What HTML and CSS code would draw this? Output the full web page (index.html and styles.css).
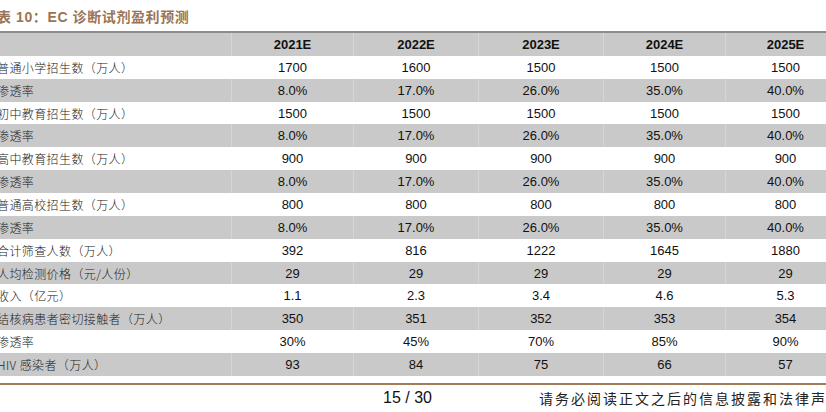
FILE: index.html
```html
<!DOCTYPE html>
<html lang="zh">
<head>
<meta charset="utf-8">
<link rel="stylesheet" href="styles.css">
</head>
<body>
<div class="page">
  <h1 class="title">表 10：EC 诊断试剂盈利预测</h1>
  <div class="table">
    <div class="row head"><span class="label"></span><span>2021E</span><span>2022E</span><span>2023E</span><span>2024E</span><span>2025E</span></div>
    <div class="row"><span class="label">普通小学招生数（万人）</span><span>1700</span><span>1600</span><span>1500</span><span>1500</span><span>1500</span></div>
    <div class="row alt"><span class="label">渗透率</span><span>8.0%</span><span>17.0%</span><span>26.0%</span><span>35.0%</span><span>40.0%</span></div>
    <div class="row"><span class="label">初中教育招生数（万人）</span><span>1500</span><span>1500</span><span>1500</span><span>1500</span><span>1500</span></div>
    <div class="row alt"><span class="label">渗透率</span><span>8.0%</span><span>17.0%</span><span>26.0%</span><span>35.0%</span><span>40.0%</span></div>
    <div class="row"><span class="label">高中教育招生数（万人）</span><span>900</span><span>900</span><span>900</span><span>900</span><span>900</span></div>
    <div class="row alt"><span class="label">渗透率</span><span>8.0%</span><span>17.0%</span><span>26.0%</span><span>35.0%</span><span>40.0%</span></div>
    <div class="row"><span class="label">普通高校招生数（万人）</span><span>800</span><span>800</span><span>800</span><span>800</span><span>800</span></div>
    <div class="row alt"><span class="label">渗透率</span><span>8.0%</span><span>17.0%</span><span>26.0%</span><span>35.0%</span><span>40.0%</span></div>
    <div class="row"><span class="label">合计筛查人数（万人）</span><span>392</span><span>816</span><span>1222</span><span>1645</span><span>1880</span></div>
    <div class="row alt"><span class="label">人均检测价格（元/人份）</span><span>29</span><span>29</span><span>29</span><span>29</span><span>29</span></div>
    <div class="row"><span class="label">收入（亿元）</span><span>1.1</span><span>2.3</span><span>3.4</span><span>4.6</span><span>5.3</span></div>
    <div class="row alt"><span class="label">结核病患者密切接触者（万人）</span><span>350</span><span>351</span><span>352</span><span>353</span><span>354</span></div>
    <div class="row"><span class="label">渗透率</span><span>30%</span><span>45%</span><span>70%</span><span>85%</span><span>90%</span></div>
    <div class="row alt"><span class="label">HIV 感染者（万人）</span><span>93</span><span>84</span><span>75</span><span>66</span><span>57</span></div>
  </div>
  <div class="rule"></div>
  <div class="footer">
    <span class="pageno">15 / 30</span>
    <span class="notice">请务必阅读正文之后的信息披露和法律声明</span>
  </div>
</div>
</body>
</html>
```
FILE: styles.css
```css
html, body {
  margin: 0;
  padding: 0;
  background: #ffffff;
  overflow: hidden;
}
.page {
  width: 826px;
  height: 412px;
  overflow: hidden;
  font-family: "Liberation Sans", Arial, "Noto Sans CJK SC", sans-serif;
  color: #111;
}
.title {
  margin: 0 0 0 -3px;
  height: 31px;
  display: flex;
  align-items: center;
  font-size: 14px;
  font-weight: bold;
  color: #9b7453;
  letter-spacing: 0.6px;
  font-family: "Liberation Sans", Arial, "Noto Sans CJK SC", sans-serif;
  white-space: nowrap;
}
.table {
  border-top: 2px solid #8c8c8c;
}
.row {
  display: grid;
  grid-template-columns: 231px 122px 125px 125px 122px 120px;
  height: 22.87px;
  align-items: center;
  background: #ffffff;
  font-size: 13px;
  white-space: nowrap;
}
.row.alt, .row.head {
  background: #c9c9c9;
}
.row.head {
  font-weight: bold;
}
.row span {
  text-align: center;
  height: 100%;
  display: flex;
  align-items: center;
  justify-content: center;
  border-left: 1px solid rgba(255, 255, 255, 0.25);
}
.row .label {
  justify-content: flex-start;
  border-left: none;
  margin-left: -3px;
  font-family: "Noto Sans CJK SC", sans-serif;
  font-size: 12px;
  font-weight: 300;
  letter-spacing: 0.4px;
  color: #222;
}
.rule {
  margin-top: 7px;
  height: 2px;
  background: #a57c58;
}
.footer {
  display: flex;
  align-items: center;
  height: 26px;
  white-space: nowrap;
}
.pageno {
  margin-left: 383px;
  font-size: 16px;
  color: #111;
}
.notice {
  margin-left: 107px;
  font-family: "Noto Sans CJK SC", sans-serif;
  font-size: 14px;
  letter-spacing: 2px;
  color: #222;
}
```
